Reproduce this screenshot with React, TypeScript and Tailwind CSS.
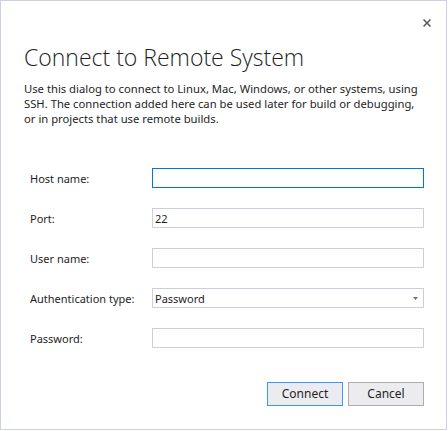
import React from 'react';

const font = { fontFamily: '"Noto Sans", "Open Sans", sans-serif' };

const Field: React.FC<{ label: string; focused?: boolean; value?: string; select?: boolean }> = ({
  label,
  focused,
  value,
  select,
}) => {
  return (
    <div className="grid grid-cols-[122px_1fr] items-center h-[20px]">
      <label className="text-[11px] text-[#1e1e1e] leading-none">{label}</label>
      <div
        className={`h-[20px] flex items-center justify-between pl-[2px] pr-[5px] bg-white ${
          focused ? 'border border-[#007acc]' : 'border border-[#cccedb]'
        }`}
      >
        <span className="text-[11px] text-[#1e1e1e] leading-none">{value}</span>
        {select && (
          <svg width="5" height="3" viewBox="0 0 5 3">
            <path d="M0 0h5L2.5 3z" fill="#717171" />
          </svg>
        )}
      </div>
    </div>
  );
};

export default function App() {
  return (
    <div className="w-[448px] h-[431px] bg-white" style={font}>
      <div className="relative w-[447px] h-[430px] border border-[#ccd0e0] bg-white">
        <button className="absolute top-[17px] left-[421px] w-[10px] h-[10px] flex items-center justify-center">
          <svg width="8" height="8" viewBox="0 0 8 8">
            <path d="M0.5 0.5L7.5 7.5M7.5 0.5L0.5 7.5" stroke="#555" strokeWidth="1.5" />
          </svg>
        </button>

        <div className="pt-[42px] pl-[23px] pr-[22px]">
          <h1
            className="text-[23px] font-light text-[#1e1e1e] leading-[28px]"
            style={{ fontFamily: '"Open Sans", "Noto Sans", sans-serif' }}
          >
            Connect to Remote System
          </h1>
          <p className="mt-[10px] text-[11.25px] leading-[15px] text-[#1e1e1e]">
            Use this dialog to connect to Linux, Mac, Windows, or other systems, using
            <br />
            SSH. The connection added here can be used later for build or debugging,
            <br />
            or in projects that use remote builds.
          </p>
        </div>

        <div className="mt-[42px] pl-[29px] pr-[22px] flex flex-col gap-[20px]">
          <Field label="Host name:" focused />
          <Field label="Port:" value="22" />
          <Field label="User name:" />
          <Field label="Authentication type:" value="Password" select />
          <Field label="Password:" />
        </div>

        <div className="mt-[34px] pr-[22px] flex justify-end gap-[5px]">
          <button className="w-[76px] h-[24px] border border-[#3399ff] bg-[#ececf0] text-[12px] text-[#1e1e1e]">
            Connect
          </button>
          <button className="w-[76px] h-[24px] border border-[#adadad] bg-[#ececf0] text-[12px] text-[#1e1e1e]">
            Cancel
          </button>
        </div>
      </div>
    </div>
  );
}
